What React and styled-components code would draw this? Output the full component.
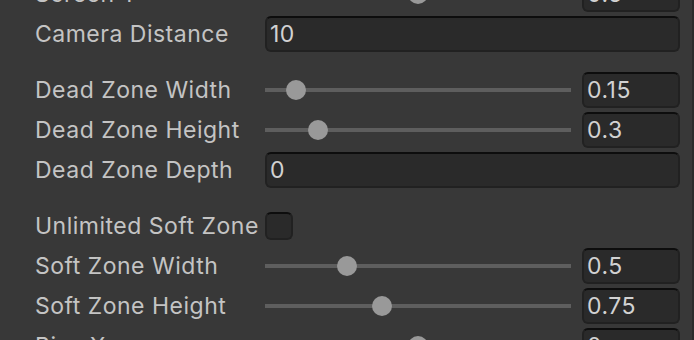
import React from "react";
import styled, { createGlobalStyle } from "styled-components";

const Global = createGlobalStyle`
  html, body { margin: 0; padding: 0; background: #383838; overflow: hidden; }
  body { font-family: Inter, "Noto Sans", sans-serif; }
`;

const Panel = styled.div`
  width: 694px;
  height: 340px;
  overflow: hidden;
  box-sizing: border-box;
  border-right: 2px solid #2b2b2b;
  background: #383838;
`;

const List = styled.div`
  display: flex;
  flex-direction: column;
  gap: 4px;
  margin-top: -24px;
  padding: 0 12px 0 35px;
`;

const Row = styled.div`
  display: grid;
  grid-template-columns: 230px 1fr;
  align-items: center;
  height: 36px;
  margin-top: ${(p) => (p.$spaced ? "16px" : "0")};
`;

const Label = styled.div`
  color: #c4c4c4;
  font-size: 23px;
  letter-spacing: 0.5px;
  white-space: nowrap;
`;

const Field = styled.div`
  box-sizing: border-box;
  height: 36px;
  background: #2a2a2a;
  border: 2px solid #212121;
  border-top-color: #0d0d0d;
  border-radius: 6px;
  color: #d2d2d2;
  font-size: 23px;
  letter-spacing: 0.5px;
  padding-left: 3px;
  display: flex;
  align-items: center;
`;

const SliderWrap = styled.div`
  display: grid;
  grid-template-columns: 306px 98px;
  gap: 11px;
  align-items: center;
`;

const Track = styled.div`
  position: relative;
  height: 4px;
  background: #5e5e5e;
`;

const Knob = styled.div`
  position: absolute;
  top: 50%;
  width: 20px;
  height: 20px;
  margin: -10px 0 0 -10px;
  border-radius: 50%;
  background: #999999;
`;

const Check = styled.div`
  box-sizing: border-box;
  width: 28px;
  height: 28px;
  background: #2a2a2a;
  border: 2px solid #212121;
  border-top-color: #0d0d0d;
  border-radius: 6px;
`;

const Slider = ({ value, min, max }) => {
  const frac = (parseFloat(value) - min) / (max - min);
  return (
    <SliderWrap>
      <Track>
        <Knob style={{ left: 10 + frac * 286 + "px" }} />
      </Track>
      <Field>{value}</Field>
    </SliderWrap>
  );
};

export default function App() {
  return (
    <Panel>
      <Global />
      <List>
        <Row>
          <Label>Screen Y</Label>
          <Slider value="0.5" min={0} max={1} />
        </Row>
        <Row>
          <Label>Camera Distance</Label>
          <Field>10</Field>
        </Row>
        <Row $spaced>
          <Label>Dead Zone Width</Label>
          <Slider value="0.15" min={0} max={2} />
        </Row>
        <Row>
          <Label>Dead Zone Height</Label>
          <Slider value="0.3" min={0} max={2} />
        </Row>
        <Row>
          <Label>Dead Zone Depth</Label>
          <Field>0</Field>
        </Row>
        <Row $spaced>
          <Label>Unlimited Soft Zone</Label>
          <Check />
        </Row>
        <Row>
          <Label>Soft Zone Width</Label>
          <Slider value="0.5" min={0} max={2} />
        </Row>
        <Row>
          <Label>Soft Zone Height</Label>
          <Slider value="0.75" min={0} max={2} />
        </Row>
        <Row>
          <Label>Bias X</Label>
          <Slider value="0" min={-0.5} max={0.5} />
        </Row>
      </List>
    </Panel>
  );
}
